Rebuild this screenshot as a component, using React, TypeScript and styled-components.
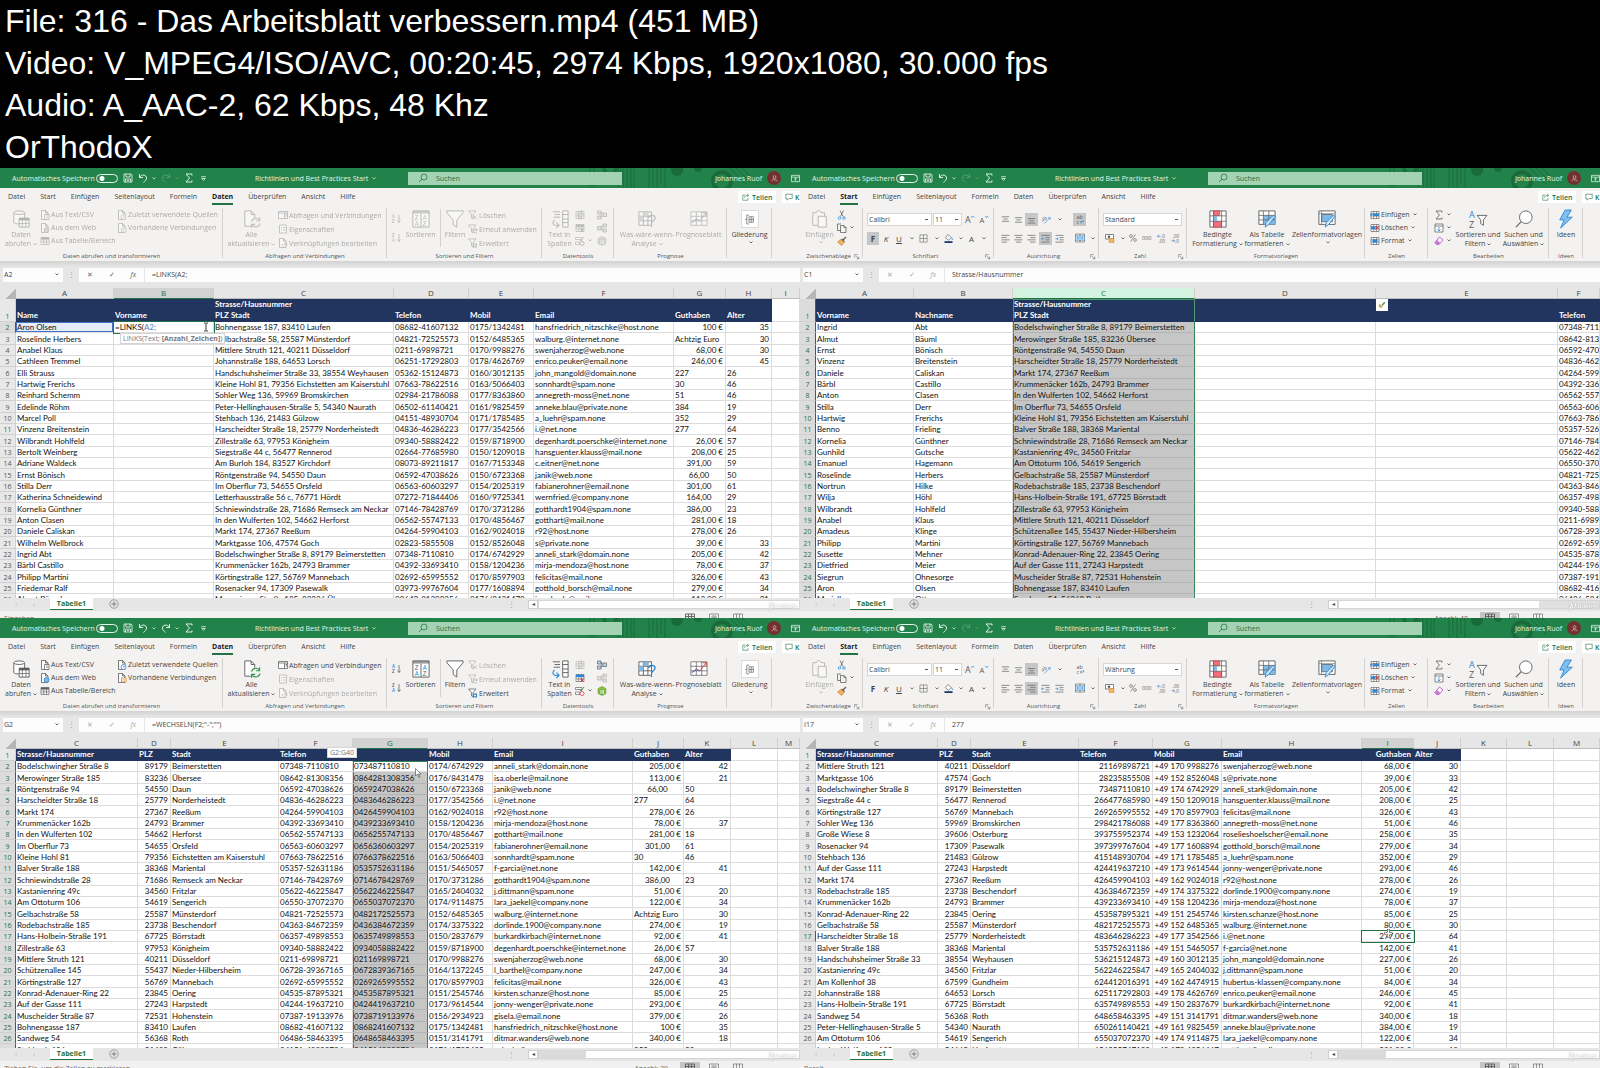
import React from "react";
import styled, { createGlobalStyle, css } from "styled-components";

const UI = `"Open Sans", "Noto Sans", sans-serif`;
const CELL = `Lato, "Noto Sans", sans-serif`;
const GREEN = "#217346";

const Global = createGlobalStyle`
  * { box-sizing: border-box; }
  body { margin: 0; background: #000; }
  button, input, select { font: inherit; color: inherit; border: 0; padding: 0; margin: 0; background: none; border-radius: 0; outline: 0; }
`;

/* ---------- icons ---------- */

type IconName = keyof typeof icons;
const K = "#5c5c5c";
const B = "#2b88d8";

const doc = (
  <path d="M3 1h8l5 5v13H3zM11 1v5h5" fill="#fff" stroke={K} strokeWidth="1.6" />
);
const grid = (
  <path d="M2 3h16v14H2zM2 7.500h16M2 12h16M7.500 3v14M13 3v14" fill="#fff" stroke={K} strokeWidth="1.300" />
);
const funnel = <path d="M1 2h15l-6 7v9l-3-2V9z" fill="#fff" stroke={K} strokeWidth="1.500" />;
const letters = (t: string, x: number, y: number, s: number, f = K, w = 400) => (
  <text x={x} y={y} fontSize={s} fill={f} fontWeight={w} fontFamily="Open Sans, sans-serif">{t}</text>
);
const lines = (rows: number[][]) => (
  <path d={rows.map(([x, y, w]) => `M${x} ${y}h${w}`).join("")} stroke={K} strokeWidth="1.500" fill="none" />
);

const icons = {
  data: (
    <>
      <path d="M2 3v11c0 2 12 2 12 0V3" fill="#fff" stroke={K} />
      <ellipse cx="8" cy="3" rx="6" ry="2" fill="#fff" stroke={K} />
      <path d="M8 9h11v10H8z" fill="#fff" stroke={K} />
      <path d="M8 9h11v2.500H8z" fill={K} />
      <path d="M8 15h11M11.500 9v10M15.500 9v10" stroke={K} strokeWidth=".8" />
    </>
  ),
  docText: <>{doc}<path d="M9 9h9v10H9z" fill="#fff" stroke={K} strokeWidth="1.500" /><path d="M12 12h4M12 15h4" stroke={K} /></>,
  docWeb: <>{doc}<circle cx="13" cy="14" r="5" fill="#7fb9e6" stroke={B} strokeWidth="1.500" /></>,
  docClock: <>{doc}<circle cx="13" cy="14" r="5" fill="#fff" stroke={B} strokeWidth="1.500" /><path d="M13 11v3h3" fill="none" stroke={B} strokeWidth="1.300" /></>,
  docLink: <>{doc}<path d="M9 10h9v8H9z" fill="#fff" stroke="#d98326" strokeWidth="1.600" /><path d="M11 14h5" stroke="#d98326" strokeWidth="1.500" /></>,
  table: <>{grid}<path d="M2 3h16v3H2z" fill={K} /></>,
  refresh: (
    <>
      <path d="M2 1h7l4 4v13H2zM9 1v4h4" fill="#fff" stroke={K} />
      <circle cx="14" cy="14" r="6" fill="#f3f2f1" />
      <path d="M9.500 13a5 5 0 0 1 9-1.500M18.500 8v4h-4M19 15a5 5 0 0 1-9 1.500M9.500 20v-4h4" fill="none" stroke="#3a9a55" strokeWidth="1.200" />
    </>
  ),
  panel: <path d="M1 3h18v14H1zM1 6h18M13 6v11M15 9h3M15 12h3" fill="#fff" stroke={K} strokeWidth="1.500" />,
  props: <path d="M3 2h14v16H3zM6 7h2M6 12h2M10 7h5M10 12h5" fill="#fff" stroke={K} strokeWidth="1.500" />,
  links: <>{doc}<path d="M7 12l5 5m0-5a3 3 0 0 1 5 4" fill="none" stroke={K} strokeWidth="1.800" /></>,
  az: <>{letters("A", 0, 8, 9, B, 600)}{letters("Z", 0, 18, 9, K, 600)}<path d="M14 2v15M11 13l3 4 3-4" fill="none" stroke={K} strokeWidth="1.500" /></>,
  za: <>{letters("Z", 0, 8, 9, K, 600)}{letters("A", 0, 18, 9, B, 600)}<path d="M14 2v15M11 13l3 4 3-4" fill="none" stroke={K} strokeWidth="1.500" /></>,
  sort: (
    <>
      <path d="M1 1h18v18H1zM10 4v15" fill="#fff" stroke={K} />
      <path d="M1 1h18v3H1z" fill={K} opacity=".6" />
      {letters("Z", 3, 11, 7)}{letters("A", 3, 18, 7, B)}{letters("A", 12, 11, 7, B)}{letters("Z", 12, 18, 7)}
    </>
  ),
  funnel: <path d="M1 1h18v2l-7 8v8l-4-3v-5L1 3z" fill="#fff" stroke={K} />,
  funnelX: <>{funnel}<path d="M10 11l7 7m0-7l-7 7" stroke={K} strokeWidth="1.500" /></>,
  funnelRe: <>{funnel}<path d="M18 12a4 4 0 1 0 0 4M18 9v4h-4" fill="none" stroke={K} strokeWidth="1.500" /></>,
  funnelAdv: <>{funnel}<rect x="10" y="11" width="8" height="8" fill={B} /><circle cx="14" cy="15" r="2" fill="#fff" /></>,
  textCols: (
    <>
      <path d="M2 2h8M4 5h6M3 8h7" stroke={K} />
      <path d="M13 1h6v18h-6zM13 5h6M13 10h6M13 14h6" fill="#fff" stroke={K} />
      <path d="M4 11c-4 4-1 7 5 6M6 14l3 3-3 3" fill="none" stroke={B} strokeWidth="1.200" />
    </>
  ),
  flash: <>{grid}<path d="M12 1L6 11h4l-2 8 8-11h-4l2-7z" fill="#ccc" stroke={K} /></>,
  dup: <>{grid}<path d="M2 3h16v5H2z" fill={B} /><path d="M11 11l6 6m0-6l-6 6" stroke="#d13438" strokeWidth="2" /></>,
  valid: <><path d="M1 3h13v4H1zM1 12h8v5H1z" fill="#fff" stroke={K} strokeWidth="1.300" /><path d="M9 7l3 3 6-8" fill="none" stroke="#3a9a55" strokeWidth="2" /><circle cx="14" cy="15" r="4" fill="#fff" stroke="#d13438" strokeWidth="1.600" /></>,
  consol: <path d="M1 2h7v6H1zM1 12h7v6H1zM12 6h7v7h-7zM8 5h2v9H8" fill="#b9d9f2" stroke={K} strokeWidth="1.400" />,
  relate: <path d="M1 7h7v7H1zM12 2h7v6h-7zM12 12h7v6h-7zM8 10h2V5h2M10 10v5h2" fill="#ccc" stroke={K} strokeWidth="1.400" />,
  model: <><path d="M2 5l8-4 8 4v10l-8 4-8-4z" fill="#8cc63f" stroke="#4c8c1f" /><path d="M6 8h9v8H6zM6 12h9M10 8v8" fill="#fff" stroke="#4c8c1f" /></>,
  whatif: (
    <>
      <path d="M1 2h14v15H1zM1 7h14M1 12h14M6 2v15M11 2v15" fill="#fff" stroke={K} />
      <path d="M6 2h5v5H6zM1 7h5v5H1z" fill="#7fb9e6" />
      <path d="M12 9c0-4 7-4 7 0 0 3-4 3-4 6M15 17v2" fill="none" stroke={B} strokeWidth="1.400" />
    </>
  ),
  forecast: (
    <>
      <path d="M1 2h18v15H1zM1 7h18M1 12h18M7 2v15M13 2v15" fill="#fff" stroke={K} strokeWidth=".8" />
      <path d="M2 14l5-4 4 2 7-9M14 3h4v4" fill="none" stroke="#d13438" />
      <path d="M2 14l5-3 4 1" fill="none" stroke={B} />
    </>
  ),
  outline: <path d="M9 2H5v16h4M2 10h3M9 5h8v10H9zM13 5v10M9 10h8" fill="#fff" stroke={K} strokeWidth="1.200" />,
  paste: <path d="M2 3h4c0-3 5-3 5 0h4v4M2 3v14h6M8 7h9v12H8z" fill="#fff" stroke={K} strokeWidth="1" />,
  cut: <><path d="M6 1l6 12M13 1L7 13" stroke={K} strokeWidth="1.500" /><circle cx="5" cy="16" r="2.500" fill="none" stroke={B} strokeWidth="1.500" /><circle cx="14" cy="16" r="2.500" fill="none" stroke={B} strokeWidth="1.500" /></>,
  copy: <path d="M8 15H1V2h7M7 5h7l4 4v10H7zM14 5v4h4" fill="none" stroke={K} strokeWidth="1.500" />,
  brush: <><path d="M18 2l-6 6M9 6l6 6" stroke={K} strokeWidth="2.500" /><path d="M8 7l6 6-5 6-8-7z" fill="#f0b264" stroke="#d98326" strokeWidth="1.500" /></>,
  border: <path d="M2 2h16v16H2zM2 10h16M10 2v16" fill="none" stroke={K} strokeWidth="1.200" />,
  bucket: <><path d="M9 1l7 7-6 6-7-6z" fill="#fff" stroke={K} strokeWidth="1.500" /><path d="M17 8l2 5" stroke={B} strokeWidth="2" /><path d="M1 16h18v4H1z" fill="#20386b" /></>,
  growFont: <>{letters("A", 0, 18, 20)}<path d="M14 6l3-4 3 4" fill="none" stroke={B} strokeWidth="1.700" /></>,
  shrinkFont: <>{letters("A", 1, 18, 17)}<path d="M14 2l3 4 3-4" fill="none" stroke={B} strokeWidth="1.700" /></>,
  top: lines([[2, 4, 16], [5, 9, 10], [2, 14, 16]]),
  middle: lines([[2, 6, 16], [5, 11, 10], [2, 16, 16]]),
  bottom: lines([[2, 8, 16], [5, 13, 10], [2, 18, 16]]),
  left: lines([[1, 3, 18], [1, 8, 12], [1, 13, 18], [1, 18, 12]]),
  center: lines([[1, 3, 18], [4, 8, 12], [1, 13, 18], [4, 18, 12]]),
  right: lines([[1, 3, 18], [7, 8, 12], [1, 13, 18], [7, 18, 12]]),
  orient: <><path d="M5 19L18 6M18 11V6h-5" fill="none" stroke={B} strokeWidth="1.400" /><g transform="rotate(-30 6 12)">{letters("ab", 0, 12, 11)}</g></>,
  wrap: <>{letters("ab", 3, 9, 11)}{letters("c", 3, 19, 11)}<path d="M11 16h6v-4M13 13l-2 3 2 3" fill="none" stroke={B} strokeWidth="1.400" /></>,
  outdent: <>{lines([[1, 3, 18], [10, 8, 9], [10, 13, 9], [1, 18, 18]])}<path d="M7 10.500H1M4 8l-3 2.500L4 13" fill="none" stroke={B} strokeWidth="1.500" /></>,
  indent: <>{lines([[1, 3, 18], [10, 8, 9], [10, 13, 9], [1, 18, 18]])}<path d="M1 10.500h6M4 8l3 2.500L4 13" fill="none" stroke={B} strokeWidth="1.500" /></>,
  merge: <><path d="M1 2h18v16H1zM1 6h18M1 14h18M10 2v4M10 14v4" fill="#fff" stroke={K} strokeWidth="1.300" /><path d="M1 6h18v8H1z" fill="#cfe6f7" stroke={B} /><path d="M4 10h12M6 8l-2 2 2 2M14 8l2 2-2 2" fill="none" stroke={B} strokeWidth="1.300" /></>,
  currency: <><path d="M1 3h16v9H1z" fill="#fff" stroke={K} strokeWidth="1.500" /><circle cx="8" cy="7.500" r="2.500" fill={K} /><path d="M8 11h10v8H8z" fill="#f0b264" stroke="#d98326" /></>,
  percent: <><circle cx="5" cy="5" r="3.500" fill="none" stroke={K} strokeWidth="1.500" /><circle cx="15" cy="15" r="3.500" fill="none" stroke={K} strokeWidth="1.500" /><path d="M16 1L4 19" stroke={K} strokeWidth="1.500" /></>,
  thousand: <>{letters("000", 0, 14, 11)}</>,
  decMore: <>{letters(",0", 9, 9, 10)}{letters(",00", 4, 19, 10)}<path d="M1 5h7M4 2L1 5l3 3" fill="none" stroke={B} strokeWidth="1.500" /></>,
  decLess: <>{letters(",00", 4, 9, 10)}{letters(",0", 9, 19, 10)}<path d="M1 15h7M5 12l3 3-3 3" fill="none" stroke={B} strokeWidth="1.500" /></>,
  cond: (
    <>
      <path d="M1 1h18v18H1z" fill="#fff" stroke={K} />
      <path d="M5 1h7v5H5zM5 13h9v6H5z" fill="#f1707b" stroke="#d13438" strokeWidth=".6" />
      <path d="M5 7h4v5H5z" fill="#7fb9e6" />
      <path d="M5 1v18M14 1v18M1 6.500h18M1 12.500h18" stroke={K} strokeWidth=".8" />
    </>
  ),
  fmtTable: (
    <>
      <path d="M1 1h18v15H1z" fill="#fff" stroke={K} />
      <path d="M6 6h13v10H6z" fill="#7fb9e6" />
      <path d="M1 6h18M1 11h18M6 1v15M12 1v15" stroke={K} strokeWidth=".8" />
      <path d="M19 7l-7 9-4 3 1-5 8-8z" fill="#cfe6f7" stroke={B} />
    </>
  ),
  cellStyle: (
    <>
      <path d="M1 1h18v15H1z" fill="#fff" stroke={K} />
      <path d="M4 5h12v8H4z" fill="#7fb9e6" stroke={K} strokeWidth=".8" />
      <path d="M1 4h18M4 1v15" stroke={K} strokeWidth=".6" />
      <path d="M19 7l-7 9-4 3 1-5 8-8z" fill="#cfe6f7" stroke={B} />
    </>
  ),
  insert: <>{grid}<path d="M7 7h11v5H7z" fill={B} /><path d="M7 9.500H1M4 7L1 9.500 4 12" fill="none" stroke={B} strokeWidth="1.600" /></>,
  remove: <>{grid}<path d="M2 7h9v5H2z" fill={B} /><path d="M11 6l7 7m0-7l-7 7" stroke="#d13438" strokeWidth="2" /></>,
  format: <>{grid}<path d="M5 7h10v6H5z" fill={B} /></>,
  sigma: <path d="M16 5V2H4l7 8-7 8h12v-3" fill="none" stroke={K} strokeWidth="1.600" />,
  fill: <><path d="M2 2h16v16H2zM2 6h16" fill="#fff" stroke={K} strokeWidth="1.500" /><path d="M10 8v8M7 13l3 3 3-3" fill="none" stroke={B} strokeWidth="1.600" /></>,
  eraser: <><path d="M11 2l7 6-8 9H5l-3-4z" fill="#fff" stroke="#b146c2" strokeWidth="1.700" /><path d="M6 8l7 6-3 3H5l-3-4z" fill="#c879d6" /></>,
  sortFilter: <>{letters("A", 0, 9, 10, B)}{letters("Z", 0, 20, 10)}<path d="M9 6h11l-4 5v6l-3-2v-4z" fill="#fff" stroke={K} /></>,
  find: <><circle cx="12" cy="8" r="7" fill="#fff" stroke={K} /><path d="M7 13l-6 6" stroke={K} strokeWidth="1.200" /></>,
  bolt: <path d="M9 0L3 11h5L4 20 17 8h-6l5-8z" fill="#7fc0f0" stroke={B} />,
  save: <path d="M2 2h14l2 2v14H2zM6 2v6h8V2M5 18v-6h10v6M8 15h4" fill="none" stroke="#fff" strokeWidth="1.500" />,
  undo: <path d="M3 2v7h7M3 9c5-8 14-5 14 1 0 4-3 6-6 9" fill="none" stroke="#fff" strokeWidth="1.700" />,
  redo: <path d="M17 2v7h-7M17 9C12 1 3 4 3 10c0 4 3 6 6 9" fill="none" stroke="#fff" strokeWidth="1.700" />,
  sigmaW: <path d="M16 5V2H4l7 8-7 8h12v-3" fill="none" stroke="#fff" strokeWidth="1.700" />,
  more: <path d="M5 6h10M6 10l4 4 4-4z" fill="none" stroke="#fff" strokeWidth="1.600" />,
  lens: <><circle cx="12" cy="8" r="6" fill="none" stroke={GREEN} strokeWidth="1.500" /><path d="M8 12l-6 6" stroke={GREEN} strokeWidth="1.500" /></>,
  ribbonOpt: <path d="M1 3h18v14H1zM1 7h18M10 15V9M7 12l3-3 3 3" fill="none" stroke="#fff" strokeWidth="1.500" />,
  share: <path d="M8 5H2v13h13v-5M6 12c1-5 4-6 9-6M12 2l5 4-5 4" fill="none" stroke={GREEN} strokeWidth="1.500" />,
  comment: <path d="M2 3h16v11H9l-4 4v-4H2z" fill="none" stroke={GREEN} strokeWidth="1.500" />,
  person: <><circle cx="10" cy="6" r="4" fill="none" stroke="#e9c9c9" strokeWidth="1.700" /><path d="M3 18c0-9 14-9 14 0M7 12l6 6" fill="none" stroke="#e9c9c9" strokeWidth="1.700" /></>,
  launcher: <path d="M2 12V2h10M7 7l9 9M16 9v7H9" fill="none" stroke={K} strokeWidth="1.800" />,
  plus: <><circle cx="10" cy="10" r="8.500" fill="none" stroke="#767676" strokeWidth="1.300" /><path d="M10 5v10M5 10h10" stroke="#767676" strokeWidth="1.800" /></>,
  normal: <path d="M1 2h18v15H1zM1 7h18M1 12h18M7 2v15M13 2v15" fill="none" stroke={K} strokeWidth="1.800" />,
  page: <path d="M1 2h18v15H1zM6 6h8v11M6 6v11M8 9h4M8 12h4" fill="none" stroke="#777" strokeWidth="1.500" />,
  pageBreak: <path d="M1 2h18v15H1zM7 2v9h6V2" fill="none" stroke="#777" strokeWidth="1.500" />,
  pasteTag: <><path d="M17 3L10 11" stroke="#4a8b55" strokeWidth="3.500" /><path d="M4 8l7 6-4 3-5-4z" fill="#e5b04c" stroke="#8f7a3a" /></>,
  pointer: <path d="M5 1v15l4-4 3 7 2-1-3-6h5z" fill="#fff" stroke="#444" strokeWidth="1.200" />,
  cross: <path d="M8 3h4v5h5v4h-5v5H8v-5H3V8h5z" fill="#fff" stroke="#333" strokeWidth="1.600" strokeDasharray="2 1" />,
  ibeam: <path d="M6 2h3l1 1 1-1h3M10 3v14M6 18h3l1-1 1 1h3" fill="none" stroke="#222" strokeWidth="1.800" />,
  mark: <path d="M3 7c5-8 7-6 5 1l-3 8c-1 4 3 3 5-3l2-8m-1 6c-1 6 5 6 7-1l1-5" fill="none" stroke="#fff" strokeWidth="2.200" />,
};

const Svg = styled.svg<{ $size: number }>`
  display: block;
  flex: none;
  width: ${(p) => p.$size}px;
  height: ${(p) => p.$size}px;
  overflow: visible;
`;
const Icon = ({ name, size = 10 }: { name: IconName; size?: number }) => (
  <Svg $size={size} viewBox="0 0 20 20" aria-hidden="true">{icons[name]}</Svg>
);

const CaretSvg = styled.svg`
  display: inline-block;
  flex: none;
  width: 4px;
  height: 3px;
  margin-left: 2px;
  vertical-align: middle;
`;
const Caret = () => (
  <CaretSvg viewBox="0 0 8 6" aria-hidden="true">
    <path d="M1 1l3 3 3-3" fill="none" stroke="currentColor" strokeWidth="1.500" />
  </CaretSvg>
);

/* ---------- page ---------- */

const Page = styled.main`
  background: #000;
`;
const Info = styled.header`
  padding-left: 5px;
  color: #fff;
  font: 32px/42px "Liberation Sans", Arial, sans-serif;
  white-space: nowrap;
  overflow: hidden;
`;
const InfoLine = styled.div``;
const Frames = styled.div`
  display: grid;
  grid-template-columns: minmax(0, 1fr) minmax(0, 1fr);
`;
const Frame = styled.section`
  display: flex;
  flex-direction: column;
  min-width: 0;
  overflow: hidden;
  background: #e6e6e6;
  color: #444;
  font: 7px/9px ${UI};
  white-space: nowrap;
`;

/* ---------- title bar ---------- */

const TitleBar = styled.div`
  position: relative;
  display: grid;
  grid-template-columns: 246fr 162fr 214fr 178fr;
  align-items: center;
  height: 20px;
  overflow: hidden;
  background: #22834a;
  color: #e4f3e9;
`;
const Pattern = styled.svg`
  position: absolute;
  right: 50px;
  top: 0;
  width: 170px;
  height: 20px;
`;
const Quick = styled.div`
  display: flex;
  align-items: center;
  gap: 5px;
  padding-left: 12px;
`;
const AutoSave = styled.label`
  display: flex;
  align-items: center;
  gap: 1px;
`;
const Toggle = styled.input`
  appearance: none;
  width: 22px;
  height: 9px;
  border: 1px solid #e4f3e9;
  border-radius: 5px;
  background: radial-gradient(circle at 5px 50%, #fff 2px, transparent 3px);
`;
const QuickButton = styled.button<{ $dim?: boolean }>`
  display: flex;
  align-items: center;
  gap: 2px;
  opacity: ${(p) => (p.$dim ? 0.25 : 1)};
`;
const FileTitle = styled.button`
  justify-self: start;
  margin-left: 9px;
  white-space: nowrap;
`;
const Search = styled.label`
  position: relative;
  display: flex;
  align-items: center;
  gap: 8px;
  height: 13px;
  padding-left: 10px;
  background: #a3d3b2;
  color: ${GREEN};
`;
const SearchInput = styled.input`
  flex: 1;
  min-width: 0;
  &::placeholder { color: #2c6e48; opacity: 1; }
`;
const Account = styled.div`
  position: relative;
  display: flex;
  align-items: center;
  justify-content: flex-end;
  gap: 5px;
`;
const Avatar = styled.span`
  display: grid;
  place-items: center;
  width: 14px;
  height: 14px;
  margin-right: 5px;
  border-radius: 50%;
  background: #74302f;
`;

/* ---------- ribbon ---------- */

const Tabs = styled.nav`
  display: flex;
  align-items: center;
  gap: 15px;
  height: 18px;
  padding-left: 8px;
  background: #f3f2f1;
`;
const Tab = styled.button<{ $on?: boolean }>`
  height: 16px;
  border-bottom: 2px solid transparent;
  ${(p) => p.$on && css`
    border-color: ${GREEN};
    color: #222;
    font-weight: 700;
  `}
`;
const Actions = styled.div`
  display: flex;
  gap: 6px;
  margin-left: auto;
  overflow: hidden;
`;
const Action = styled.button<{ $cut?: boolean }>`
  display: flex;
  align-items: center;
  gap: 2px;
  width: ${(p) => (p.$cut ? 18 : 38)}px;
  height: 12px;
  padding-left: ${(p) => (p.$cut ? 3 : 4)}px;
  background: #fff;
  color: ${GREEN};
  font-weight: 600;
`;
const RibbonBar = styled.div`
  display: flex;
  height: 55px;
  background: #f3f2f1;
`;
const GroupBox = styled.div<{ $w: number }>`
  display: flex;
  flex: none;
  flex-direction: column;
  width: ${(p) => p.$w}px;
  padding-top: 1px;
  background: linear-gradient(#d4d2d0, #d4d2d0) right 2px / 1px 50px no-repeat;
`;
const GroupBody = styled.div<{ $pad: number }>`
  display: flex;
  flex: none;
  height: 45px;
  padding-left: ${(p) => p.$pad}px;
`;
const GroupLabel = styled.div`
  display: flex;
  align-items: center;
  justify-content: center;
  height: 9px;
  font-size: 6px;
  color: #555;
  padding: 0 3px;
`;
const LabelText = styled.span`
  flex: 1;
  text-align: center;
`;
const off = css`
  filter: grayscale(1);
  opacity: 0.42;
`;
const Big = styled.button<{ $w: number; $off?: boolean }>`
  display: flex;
  flex: none;
  flex-direction: column;
  align-items: center;
  justify-content: flex-start;
  gap: 2px;
  width: ${(p) => p.$w}px;
  padding-top: 3px;
  line-height: 9px;
  ${(p) => p.$off && off}
`;
const BigText = styled.span`
  text-align: center;
  white-space: pre;
`;
const Boxed = styled.span`
  display: grid;
  place-items: center;
  width: 18px;
  height: 18px;
  border: 1px solid #dddbd9;
  background: #fff;
`;
const Small = styled.button<{ $off?: boolean }>`
  display: flex;
  align-items: center;
  gap: 1px;
  height: 14px;
  ${(p) => p.$off && off}
`;
const List = styled.div<{ $w: number; $tight?: boolean }>`
  display: flex;
  flex: none;
  flex-direction: column;
  width: ${(p) => p.$w}px;
  padding-top: 1px;
  ${Small} { height: ${(p) => (p.$tight ? 13 : 14)}px; }
`;
const Rule = styled.span`
  width: 1px;
  height: 38px;
  margin: 2px 1px;
  background: #d4d2d0;
`;
const Rows = styled.div`
  display: flex;
  flex-direction: column;
  gap: 5px;
  padding-top: 5px;
`;
const Line = styled.div`
  display: flex;
  align-items: center;
  gap: 1px;
  height: 14px;
`;
const Mini = styled.button<{ $on?: boolean; $w?: number }>`
  display: flex;
  flex: none;
  align-items: center;
  justify-content: center;
  width: ${(p) => p.$w ?? 12}px;
  height: 13px;
  font-size: 8px;
  background: ${(p) => (p.$on ? "#c6c6c6" : "none")};
`;
const Spacer = styled.span<{ $w: number }>`
  flex: none;
  width: ${(p) => p.$w}px;
`;
const Drop = styled.select<{ $w: number }>`
  appearance: none;
  flex: none;
  width: ${(p) => p.$w}px;
  height: 13px;
  padding-left: 1px;
  border: 1px solid #d8d6d4;
  background: #fff linear-gradient(#555, #555) right 3px center / 3px 1px no-repeat;
`;
const Gap = styled.span`
  flex: 1;
`;

type GroupProps = { w: number; label: string; pad?: number; launch?: boolean; children: React.ReactNode };
const Group = ({ w, label, pad = 2, launch, children }: GroupProps) => (
  <GroupBox $w={w}>
    <GroupBody $pad={pad}>{children}</GroupBody>
    <GroupLabel>
      <LabelText>{label}</LabelText>
      {launch && <Icon name="launcher" size={6} />}
    </GroupLabel>
  </GroupBox>
);
type BigProps = { icon: IconName; w: number; text: string; drop?: boolean; disabled?: boolean };
const BigTool = ({ icon, w, text, drop, disabled }: BigProps) => (
  <Big $w={w} $off={disabled}>
    <Icon name={icon} size={18} />
    <BigText>{text}{drop && <Caret />}</BigText>
  </Big>
);
type SmallProps = { icon: IconName; text?: string; drop?: boolean; disabled?: boolean };
const Tool = ({ icon, text, drop, disabled }: SmallProps) => (
  <Small $off={disabled} aria-label={text ?? icon}>
    <Icon name={icon} />{text}{drop && <Caret />}
  </Small>
);

const DataRibbon = ({ locked }: { locked: boolean }) => (
  <RibbonBar>
    <Group w={223} label="Daten abrufen und transformieren">
      <BigTool icon="data" w={38} text={"Daten\nabrufen"} drop disabled={locked} />
      <List $w={77} $tight>
        <Tool icon="docText" text="Aus Text/CSV" disabled={locked} />
        <Tool icon="docWeb" text="Aus dem Web" disabled={locked} />
        <Tool icon="table" text="Aus Tabelle/Bereich" disabled={locked} />
      </List>
      <List $w={100} $tight>
        <Tool icon="docClock" text="Zuletzt verwendete Quellen" disabled={locked} />
        <Tool icon="docLink" text="Vorhandene Verbindungen" disabled={locked} />
      </List>
    </Group>
    <Group w={164} label="Abfragen und Verbindungen">
      <BigTool icon="refresh" w={53} text={"Alle\naktualisieren"} drop disabled={locked} />
      <List $w={106}>
        <Tool icon="panel" text="Abfragen und Verbindungen" disabled={locked} />
        <Tool icon="props" text="Eigenschaften" disabled />
        <Tool icon="links" text="Verknüpfungen bearbeiten" disabled />
      </List>
    </Group>
    <Group w={155} label="Sortieren und Filtern" pad={5}>
      <Rows>
        <Small $off={locked} aria-label="Von A bis Z sortieren"><Icon name="az" /></Small>
        <Small $off={locked} aria-label="Von Z bis A sortieren"><Icon name="za" /></Small>
      </Rows>
      <BigTool icon="sort" w={37} text="Sortieren" disabled={locked} />
      <Rule />
      <BigTool icon="funnel" w={26} text="Filtern" disabled={locked} />
      <List $w={70}>
        <Tool icon="funnelX" text="Löschen" disabled />
        <Tool icon="funnelRe" text="Erneut anwenden" disabled />
        <Tool icon="funnelAdv" text="Erweitert" disabled={locked} />
      </List>
    </Group>
    <Group w={72} label="Datentools">
      <BigTool icon="textCols" w={31} text={"Text in\nSpalten"} disabled={locked} />
      <List $w={22} $tight>
        <Tool icon="flash" disabled />
        <Tool icon="dup" disabled={locked} />
        <Tool icon="valid" drop disabled={locked} />
      </List>
      <List $w={12} $tight>
        <Tool icon="consol" disabled={locked} />
        <Tool icon="relate" disabled />
        <Tool icon="model" disabled={locked} />
      </List>
    </Group>
    <Group w={113} label="Prognose" pad={5}>
      <BigTool icon="whatif" w={56} text={"Was-wäre-wenn-\nAnalyse"} drop disabled={locked} />
      <BigTool icon="forecast" w={47} text="Prognoseblatt" disabled={locked} />
    </Group>
    <Group w={45} label="">
      <Big $w={41}>
        <Boxed><Icon name="outline" size={11} /></Boxed>
        <BigText>Gliederung</BigText>
        <Caret />
      </Big>
    </Group>
  </RibbonBar>
);

const StartRibbon = ({ early }: { early: boolean }) => (
  <RibbonBar>
    <Group w={63} label="Zwischenablage" launch>
      <Big $w={35} $off>
        <Icon name="paste" size={18} />
        <BigText>Einfügen</BigText>
        <Caret />
      </Big>
      <List $w={22} $tight>
        <Tool icon="cut" />
        <Tool icon="copy" drop />
        <Tool icon="brush" />
      </List>
    </Group>
    <Group w={131} label="Schriftart" pad={4} launch>
      <Rows>
        <Line>
          <Drop $w={65} aria-label="Schriftart"><option>Calibri</option></Drop>
          <Drop $w={29} aria-label="Schriftgrad"><option>11</option></Drop>
          <Mini $w={13} aria-label="Schrift vergrößern"><Icon name="growFont" size={9} /></Mini>
          <Mini $w={13} aria-label="Schrift verkleinern"><Icon name="shrinkFont" size={9} /></Mini>
        </Line>
        <Line>
          <Mini $on={early}><b>F</b></Mini>
          <Mini><i>K</i></Mini>
          <Mini><u>U</u></Mini>
          <Mini $w={10} aria-label="Unterstreichungsart"><Caret /></Mini>
          <Mini aria-label="Rahmen"><Icon name="border" size={9} /></Mini>
          <Mini $w={11} aria-label="Rahmenart"><Caret /></Mini>
          <Mini aria-label="Füllfarbe"><Icon name="bucket" size={9} /></Mini>
          <Mini $w={10} aria-label="Füllfarben"><Caret /></Mini>
          <Mini $w={11}>A</Mini>
          <Mini $w={10} aria-label="Schriftfarben"><Caret /></Mini>
        </Line>
      </Rows>
    </Group>
    <Group w={105} label="Ausrichtung" pad={5} launch>
      <Rows>
        <Line>
          <Mini aria-label="Oben"><Icon name="top" size={9} /></Mini>
          <Mini aria-label="Mitte"><Icon name="middle" size={9} /></Mini>
          <Mini $w={13} $on aria-label="Unten"><Icon name="bottom" size={9} /></Mini>
          <Mini $w={15} aria-label="Ausrichtung"><Icon name="orient" size={9} /></Mini>
          <Mini $w={8} aria-label="Richtungen"><Caret /></Mini>
          <Spacer $w={8} />
          <Mini $w={13} $on={early} aria-label="Textumbruch"><Icon name="wrap" size={10} /></Mini>
        </Line>
        <Line>
          <Mini aria-label="Links"><Icon name="left" size={9} /></Mini>
          <Mini aria-label="Zentriert"><Icon name="center" size={9} /></Mini>
          <Mini $w={13} $on={!early} aria-label="Rechts"><Icon name="right" size={9} /></Mini>
          <Mini $w={13} $on={early} aria-label="Einzug verkleinern"><Icon name="outdent" size={9} /></Mini>
          <Mini aria-label="Einzug vergrößern"><Icon name="indent" size={9} /></Mini>
          <Spacer $w={6} />
          <Mini $w={13} aria-label="Verbinden"><Icon name="merge" size={10} /></Mini>
          <Mini $w={9} aria-label="Verbindungsart"><Caret /></Mini>
        </Line>
      </Rows>
    </Group>
    <Group w={88} label="Zahl" pad={4} launch>
      <Rows>
        <Line>
          <Drop $w={79} aria-label="Zahlenformat"><option>{early ? "Standard" : "Währung"}</option></Drop>
        </Line>
        <Line>
          <Mini $w={14} aria-label="Buchhaltung"><Icon name="currency" /></Mini>
          <Mini $w={8} aria-label="Währungen"><Caret /></Mini>
          <Mini $w={12} aria-label="Prozent"><Icon name="percent" size={8} /></Mini>
          <Mini $w={13} aria-label="Tausender"><Icon name="thousand" /></Mini>
          <Mini $w={14} aria-label="Dezimalstelle hinzufügen"><Icon name="decMore" size={9} /></Mini>
          <Mini $w={12} aria-label="Dezimalstelle löschen"><Icon name="decLess" size={9} /></Mini>
        </Line>
      </Rows>
    </Group>
    <Group w={178} label="Formatvorlagen" pad={5}>
      <BigTool icon="cond" w={51} text={"Bedingte\nFormatierung"} drop />
      <BigTool icon="fmtTable" w={48} text={"Als Tabelle\nformatieren"} drop />
      <Big $w={72}>
        <Icon name="cellStyle" size={18} />
        <BigText>Zellenformatvorlagen</BigText>
        <Caret />
      </Big>
    </Group>
    <Group w={63} label="Zellen" pad={5}>
      <List $w={52} $tight>
        <Tool icon="insert" text="Einfügen" drop />
        <Tool icon="remove" text="Löschen" drop />
        <Tool icon="format" text="Format" drop />
      </List>
    </Group>
    <Group w={121} label="Bearbeiten" pad={6}>
      <List $w={20} $tight>
        <Tool icon="sigma" drop />
        <Tool icon="fill" drop />
        <Tool icon="eraser" drop />
      </List>
      <BigTool icon="sortFilter" w={48} text={"Sortieren und\nFiltern"} drop />
      <BigTool icon="find" w={43} text={"Suchen und\nAuswählen"} drop />
    </Group>
    <Group w={34} label="Ideen">
      <BigTool icon="bolt" w={30} text="Ideen" />
    </Group>
  </RibbonBar>
);

/* ---------- formula bar ---------- */

const FormulaBar = styled.div`
  display: flex;
  align-items: center;
  height: 27px;
  padding: 0 0 0 3px;
  background: linear-gradient(#d2d2d2, #e6e6e6 6px);
`;
const NameBox = styled.label`
  display: flex;
  flex: none;
  align-items: center;
  width: 60px;
  height: 14px;
  padding: 0 4px 0 1px;
  background: #fdfdfd;
`;
const NameInput = styled.input`
  flex: 1;
  min-width: 0;
`;
const Dots = styled.span`
  width: 16px;
  text-align: center;
  color: #999;
`;
const FxBox = styled.div<{ $live?: boolean }>`
  display: flex;
  flex: none;
  align-items: center;
  justify-content: space-around;
  width: 65px;
  height: 14px;
  margin-right: 1px;
  background: #fdfdfd;
  color: ${(p) => (p.$live ? "#666" : "#aaa")};
`;
const Formula = styled.input`
  flex: 1;
  min-width: 0;
  height: 14px;
  padding-left: 7px;
  background: #fdfdfd;
`;

/* ---------- sheet ---------- */

const SheetClip = styled.div`
  height: 310px;
  overflow: hidden;
  background: #fff;
`;
const Grid = styled.table`
  width: 100%;
  table-layout: fixed;
  border-collapse: separate;
  border-spacing: 0;
  color: #111;
  font: 8px/10px ${CELL};
`;
const Letter = styled.th<{ $tone?: "grey" | "green" }>`
  height: 11px;
  padding: 0;
  border-right: 1px solid #cfcfcf;
  border-bottom: 1px solid #bdbdbd;
  background: #e6e6e6;
  color: #444;
  font: 8px/10px ${UI};
  ${(p) => p.$tone === "grey" && css`
    background: #d2d2d2;
    border-bottom-color: ${GREEN};
    color: ${GREEN};
  `}
  ${(p) => p.$tone === "green" && css`
    background: #d3f3e0;
    border-bottom-color: ${GREEN};
    color: ${GREEN};
  `}
`;
const Corner = styled.td`
  padding: 0;
  background: linear-gradient(135deg, #e6e6e6 60%, #b5b5b5 60%);
`;
const Row = styled.tr<{ $tall?: boolean }>`
  height: 11px;
  &:nth-child(3n) { height: 12px; }
  ${(p) => p.$tall && css`&:first-child { height: 23px; }`}
`;
const RowNo = styled.th<{ $on?: boolean }>`
  padding: 0;
  border-right: 1px solid #cfcfcf;
  border-bottom: 1px solid #d0d0d0;
  background: #e8e8e8;
  color: #555;
  font: 7px/9px ${UI};
  vertical-align: bottom;
  ${(p) => p.$on && css`
    background: #dcdcdc;
    border-right-color: ${GREEN};
    color: ${GREEN};
  `}
`;
type Kind = "head" | "headSel" | "plain" | "ref" | "edit" | "fill" | "first" | "active";
const Cell = styled.td<{ $kind: Kind; $align: "left" | "right" | "center"; $open?: boolean }>`
  position: ${(p) => (p.$open ? "relative" : "static")};
  padding: 0 2px 0 1px;
  overflow: ${(p) => (p.$open ? "visible" : "hidden")};
  border-right: 1px solid #dcdcdc;
  border-bottom: 1px solid #dcdcdc;
  text-align: ${(p) => p.$align};
  vertical-align: bottom;
  white-space: pre;
  ${(p) => (p.$kind === "head" || p.$kind === "headSel") && css`
    border-color: #21355f;
    background: #21355f;
    color: #fff;
    font-weight: 700;
    line-height: 11px;
  `}
  ${(p) => p.$kind === "headSel" && css`
    border-right-color: #4f9a75;
    box-shadow: inset 1px 1px #4f9a75;
  `}
  ${(p) => p.$kind === "ref" && css`background: #e6edf9; box-shadow: inset 0 0 0 1px #4472c4;`}
  ${(p) => p.$kind === "edit" && css`box-shadow: 0 0 0 1px ${GREEN};`}
  ${(p) => p.$kind === "fill" && css`
    border-bottom-color: #b4b4b4;
    border-right-color: #2e8555;
    background: #c6c6c6;
    box-shadow: inset 1px 0 #2e8555;
  `}
  ${(p) => p.$kind === "first" && css`
    border-right-color: #2e8555;
    box-shadow: inset 1px 1px #2e8555;
  `}
  ${(p) => p.$kind === "active" && css`box-shadow: 0 0 0 1px ${GREEN};`}
`;
const RefText = styled.span`
  color: #4a86c8;
`;
const Over = styled.span<{ $x: number; $y: number }>`
  position: absolute;
  z-index: 2;
  left: ${(p) => p.$x}px;
  top: ${(p) => p.$y}px;
`;
const Tip = styled(Over)`
  padding: 0 2px;
  border: 1px solid #d5d5d5;
  background: #fff;
  color: #777;
  font: 7px/9px ${UI};
`;
const Tag = styled(Over)`
  display: grid;
  place-items: center;
  width: 12px;
  height: 12px;
  background: #fff;
`;

/* ---------- bottom bars ---------- */

const SheetBar = styled.div`
  position: relative;
  display: flex;
  align-items: center;
  height: 13px;
  padding-bottom: 1px;
  background: #e6e6e6;
`;
const Nav = styled.span`
  display: flex;
  justify-content: space-around;
  width: 50px;
  padding: 0 7px;
  color: #b5b5b5;
`;
const SheetTab = styled.button`
  width: 43px;
  height: 12px;
  border-bottom: 1px solid ${GREEN};
  background: #fff;
  color: ${GREEN};
  font-weight: 700;
  line-height: 10px;
`;
const AddSheet = styled.button`
  margin: 0 auto 0 16px;
`;
const Scroll = styled.div`
  display: flex;
  align-items: center;
  width: 34%;
  height: 9px;
`;
const ScrollArrow = styled.button`
  width: 10px;
  height: 9px;
  border: 1px solid #cfcfcf;
  background: #fff;
  font-size: 6px;
  line-height: 7px;
`;
const Track = styled.div<{ $from: number; $to: number }>`
  flex: 1;
  height: 9px;
  background: ${(p) => `linear-gradient(90deg, #dadada ${p.$from}%, #fff ${p.$from}%, #fff ${p.$to}%, #e0e0e0 ${p.$to}%)`};
  border: 1px solid #d5d5d5;
`;
const Watermark = styled.span`
  position: absolute;
  right: 3px;
  top: 4px;
  display: flex;
  align-items: center;
  gap: 2px;
  color: #fff;
  font-size: 6px;
  line-height: 8px;
  filter: drop-shadow(0 0 1px #999);
`;
const Bottom = styled(Spacer)`
  height: 9px;
`;
const Status = styled.div`
  display: flex;
  align-items: flex-start;
  height: 7px;
  padding: 3px 9px 0 4px;
  overflow: hidden;
  background: #f1f1f1;
  color: #666;
`;
const Views = styled.span`
  display: flex;
  gap: 4px;
  margin: -2px 43px 0 12px;
`;
const View = styled.button<{ $on?: boolean }>`
  display: grid;
  place-items: center;
  width: 20px;
  height: 12px;
  background: ${(p) => (p.$on ? "#c4c4c4" : "none")};
`;

/* ---------- data ---------- */

/* A leading ">" aligns a cell to the right, "^" centres it. */
const parse = (t: string) => t.trim().split("\n").map((r) => r.split("|").map((c) => c.replace("¶", "\n")));

const namesSheet = parse(`
Name|Vorname|Strasse/Hausnummer¶PLZ Stadt|Telefon|Mobil|Email|Guthaben|Alter|
Aron Olsen||Bohnengasse 187, 83410 Laufen|08682-41607132|0175/1342481|hansfriedrich_nitzschke@host.none|>100 €|>35|
Roselinde Herbers||Gelbachstraße 58, 25587 Münsterdorf|04821-72525573|0152/6485365|walburg.@internet.none|Achtzig Euro|>30|
Anabel Klaus||Mittlere Struth 121, 40211 Düsseldorf|0211-69898721|0170/9988276|swenjaherzog@web.none|>68,00 €|>30|
Cathleen Tremmel||Johannstraße 188, 64653 Lorsch|06251-17292803|0178/4626769|enrico.peuker@email.none|>246,00 €|>45|
Elli Strauss||Handschuhsheimer Straße 33, 38554 Weyhausen|05362-15124873|0160/3012135|john_mangold@domain.none|227|26|
Hartwig Frerichs||Kleine Hohl 81, 79356 Eichstetten am Kaiserstuhl|07663-78622516|0163/5066403|sonnhardt@spam.none|30|46|
Reinhard Schemm||Sohler Weg 136, 59969 Bromskirchen|02984-21786088|0177/8363860|annegreth-moss@net.none|51|46|
Edelinde Röhm||Peter-Hellinghausen-Straße 5, 54340 Naurath|06502-61140421|0161/9825459|anneke.blau@private.none|384|19|
Marcel Poll||Stehbach 136, 21483 Gülzow|04151-48930704|0171/1785485|a_luehr@spam.none|352|29|
Vinzenz Breitenstein||Harscheidter Straße 18, 25779 Norderheistedt|04836-46286223|0177/3542566|i.@net.none|277|64|
Wilbrandt Hohlfeld||Zillestraße 63, 97953 Königheim|09340-58882422|0159/8718900|degenhardt.poerschke@internet.none|>26,00 €|57|
Bertolt Weinberg||Siegstraße 44 c, 56477 Rennerod|02664-77685980|0150/1209018|hansguenter.klauss@mail.none|>208,00 €|25|
Adriane Waldeck||Am Burloh 184, 83527 Kirchdorf|08073-89211817|0167/7153348|c.eitner@net.none|^391,00|59|
Ernst Bönisch||Röntgenstraße 94, 54550 Daun|06592-47038626|0150/6723368|janik@web.none|^66,00|50|
Stilla Derr||Im Oberflur 73, 54655 Orsfeld|06563-60603297|0154/2025319|fabianerohner@email.none|^301,00|61|
Katherina Schneidewind||Letterhausstraße 56 c, 76771 Hördt|07272-71844406|0160/9725341|wernfried.@company.none|^164,00|29|
Kornelia Günthner||Schniewindstraße 28, 71686 Remseck am Neckar|07146-78428769|0170/3731286|gotthardt1904@spam.none|^386,00|23|
Anton Clasen||In den Wulferten 102, 54662 Herforst|06562-55747133|0170/4856467|gotthart@mail.none|>281,00 €|18|
Daniele Caliskan||Markt 174, 27367 Reeßum|04264-59904103|0162/9024018|r92@host.none|>278,00 €|26|
Wilhelm Wellbrock||Marktgasse 106, 47574 Goch|02823-5855508|0152/8526048|s@private.none|>39,00 €|>33|
Ingrid Abt||Bodelschwingher Straße 8, 89179 Beimerstetten|07348-7110810|0174/6742929|anneli_stark@domain.none|>205,00 €|>42|
Bärbl Castillo||Krummenäcker 162b, 24793 Brammer|04392-33693410|0158/1204236|mirja-mendoza@host.none|>78,00 €|>37|
Philipp Martini||Körtingstraße 127, 56769 Mannebach|02692-65995552|0170/8597903|felicitas@mail.none|>326,00 €|>43|
Friedemar Ralf||Rosenacker 94, 17309 Pasewalk|03973-99767604|0177/1608894|gotthold_borsch@mail.none|>279,00 €|>34|
Almut Bäuml||Merowinger Straße 185, 83236 Übersee|08642-81308356|0176/8431478|isa.oberle@mail.none|>113,00 €|>21|
`);

const splitSheet = parse(`
Vorname|Nachname|Strasse/Hausnummer¶PLZ Stadt|||Telefon
Ingrid|Abt|Bodelschwingher Straße 8, 89179 Beimerstetten|||07348-7110810
Almut|Bäuml|Merowinger Straße 185, 83236 Übersee|||08642-81308356
Ernst|Bönisch|Röntgenstraße 94, 54550 Daun|||06592-47038626
Vinzenz|Breitenstein|Harscheidter Straße 18, 25779 Norderheistedt|||04836-46286223
Daniele|Caliskan|Markt 174, 27367 Reeßum|||04264-59904103
Bärbl|Castillo|Krummenäcker 162b, 24793 Brammer|||04392-33693410
Anton|Clasen|In den Wulferten 102, 54662 Herforst|||06562-55747133
Stilla|Derr|Im Oberflur 73, 54655 Orsfeld|||06563-60603297
Hartwig|Frerichs|Kleine Hohl 81, 79356 Eichstetten am Kaiserstuhl|||07663-78622516
Benno|Frieling|Balver Straße 188, 38368 Mariental|||05357-52631186
Kornelia|Günthner|Schniewindstraße 28, 71686 Remseck am Neckar|||07146-78428769
Gunhild|Gutsche|Kastanienring 49c, 34560 Fritzlar|||05622-46225847
Emanuel|Hagemann|Am Ottoturm 106, 54619 Sengerich|||06550-37072370
Roselinde|Herbers|Gelbachstraße 58, 25587 Münsterdorf|||04821-72525573
Nortrun|Hilke|Rodebachstraße 185, 23738 Beschendorf|||04363-84672359
Wilja|Höhl|Hans-Holbein-Straße 191, 67725 Börrstadt|||06357-49898553
Wilbrandt|Hohlfeld|Zillestraße 63, 97953 Königheim|||09340-58882422
Anabel|Klaus|Mittlere Struth 121, 40211 Düsseldorf|||0211-69898721
Amadeus|Klinge|Schützenallee 145, 55437 Nieder-Hilbersheim|||06728-39367165
Philipp|Martini|Körtingstraße 127, 56769 Mannebach|||02692-65995552
Susette|Mehner|Konrad-Adenauer-Ring 22, 23845 Oering|||04535-87895321
Dietfried|Meier|Auf der Gasse 111, 27243 Harpstedt|||04244-19637210
Siegrun|Ohnesorge|Muscheider Straße 87, 72531 Hohenstein|||07387-19133976
Aron|Olsen|Bohnengasse 187, 83410 Laufen|||08682-41607132
Marielle|Otto|Sandweg 54, 56368 Roth|||06486-58463395
`);

const phoneSheet = parse(`
Strasse/Hausnummer|PLZ|Stadt|Telefon||Mobil|Email|Guthaben|Alter||
Bodelschwingher Straße 8|>89179|Beimerstetten|07348-7110810|073487110810|0174/6742929|anneli_stark@domain.none|>205,00 €|>42||
Merowinger Straße 185|>83236|Übersee|08642-81308356|0864281308356|0176/8431478|isa.oberle@mail.none|>113,00 €|>21||
Röntgenstraße 94|>54550|Daun|06592-47038626|0659247038626|0150/6723368|janik@web.none|^66,00|50||
Harscheidter Straße 18|>25779|Norderheistedt|04836-46286223|0483646286223|0177/3542566|i.@net.none|277|64||
Markt 174|>27367|Reeßum|04264-59904103|0426459904103|0162/9024018|r92@host.none|>278,00 €|26||
Krummenäcker 162b|>24793|Brammer|04392-33693410|0439233693410|0158/1204236|mirja-mendoza@host.none|>78,00 €|>37||
In den Wulferten 102|>54662|Herforst|06562-55747133|0656255747133|0170/4856467|gotthart@mail.none|>281,00 €|18||
Im Oberflur 73|>54655|Orsfeld|06563-60603297|0656360603297|0154/2025319|fabianerohner@email.none|^301,00|61||
Kleine Hohl 81|>79356|Eichstetten am Kaiserstuhl|07663-78622516|0766378622516|0163/5066403|sonnhardt@spam.none|30|46||
Balver Straße 188|>38368|Mariental|05357-52631186|0535752631186|0151/5465057|f-garcia@net.none|>142,00 €|>41||
Schniewindstraße 28|>71686|Remseck am Neckar|07146-78428769|0714678428769|0170/3731286|gotthardt1904@spam.none|^386,00|23||
Kastanienring 49c|>34560|Fritzlar|05622-46225847|0562246225847|0165/2404032|j.dittmann@spam.none|>51,00 €|>20||
Am Ottoturm 106|>54619|Sengerich|06550-37072370|0655037072370|0174/9114875|lara_jaekel@company.none|>122,00 €|>34||
Gelbachstraße 58|>25587|Münsterdorf|04821-72525573|0482172525573|0152/6485365|walburg.@internet.none|Achtzig Euro|>30||
Rodebachstraße 185|>23738|Beschendorf|04363-84672359|0436384672359|0174/3375322|dorlinde.1900@company.none|>274,00 €|>19||
Hans-Holbein-Straße 191|>67725|Börrstadt|06357-49898553|0635749898553|0150/2837679|burkardkirbach@internet.none|>92,00 €|>41||
Zillestraße 63|>97953|Königheim|09340-58882422|0934058882422|0159/8718900|degenhardt.poerschke@internet.none|>26,00 €|57||
Mittlere Struth 121|>40211|Düsseldorf|0211-69898721|021169898721|0170/9988276|swenjaherzog@web.none|>68,00 €|>30||
Schützenallee 145|>55437|Nieder-Hilbersheim|06728-39367165|0672839367165|0164/1372245|l_barthel@company.none|>247,00 €|>34||
Körtingstraße 127|>56769|Mannebach|02692-65995552|0269265995552|0170/8597903|felicitas@mail.none|>326,00 €|>43||
Konrad-Adenauer-Ring 22|>23845|Oering|04535-87895321|0453587895321|0151/2545746|kirsten.schanze@host.none|>85,00 €|>25||
Auf der Gasse 111|>27243|Harpstedt|04244-19637210|0424419637210|0173/9614544|jonny-wenger@private.none|>293,00 €|>46||
Muscheider Straße 87|>72531|Hohenstein|07387-19133976|0738719133976|0156/2934923|gisela.@email.none|>379,00 €|>26||
Bohnengasse 187|>83410|Laufen|08682-41607132|0868241607132|0175/1342481|hansfriedrich_nitzschke@host.none|>100 €|>35||
Sandweg 54|>56368|Roth|06486-58463395|0648658463395|0151/3141791|ditmar.wanders@web.none|>340,00 €|>18||
Stehbach 136|>21483|Gülzow|04151-48930704|0415148930704|0171/1785485|a_luehr@spam.none|352|29||
`);

const cleanSheet = parse(`
Strasse/Hausnummer|PLZ|Stadt|Telefon|Mobil|Email|>Guthaben|Alter|||
Mittlere Struth 121|>40211|Düsseldorf|>21169898721|>+49 170 9988276|swenjaherzog@web.none|>68,00 €|>30|||
Marktgasse 106|>47574|Goch|>28235855508|>+49 152 8526048|s@private.none|>39,00 €|>33|||
Bodelschwingher Straße 8|>89179|Beimerstetten|>73487110810|>+49 174 6742929|anneli_stark@domain.none|>205,00 €|>42|||
Siegstraße 44 c|>56477|Rennerod|>266477685980|>+49 150 1209018|hansguenter.klauss@mail.none|>208,00 €|>25|||
Körtingstraße 127|>56769|Mannebach|>269265995552|>+49 170 8597903|felicitas@mail.none|>326,00 €|>43|||
Sohler Weg 136|>59969|Bromskirchen|>298421786088|>+49 177 8363860|annegreth-moss@net.none|>51,00 €|>46|||
Große Wiese 8|>39606|Osterburg|>393755952374|>+49 153 1232064|roselieshoelscher@email.none|>258,00 €|>35|||
Rosenacker 94|>17309|Pasewalk|>397399767604|>+49 177 1608894|gotthold_borsch@mail.none|>279,00 €|>34|||
Stehbach 136|>21483|Gülzow|>415148930704|>+49 171 1785485|a_luehr@spam.none|>352,00 €|>29|||
Auf der Gasse 111|>27243|Harpstedt|>424419637210|>+49 173 9614544|jonny-wenger@private.none|>293,00 €|>46|||
Markt 174|>27367|Reeßum|>426459904103|>+49 162 9024018|r92@host.none|>278,00 €|>26|||
Rodebachstraße 185|>23738|Beschendorf|>436384672359|>+49 174 3375322|dorlinde.1900@company.none|>274,00 €|>19|||
Krummenäcker 162b|>24793|Brammer|>439233693410|>+49 158 1204236|mirja-mendoza@host.none|>78,00 €|>37|||
Konrad-Adenauer-Ring 22|>23845|Oering|>453587895321|>+49 151 2545746|kirsten.schanze@host.none|>85,00 €|>25|||
Gelbachstraße 58|>25587|Münsterdorf|>482172525573|>+49 152 6485365|walburg.@internet.none|>80,00 €|>30|||
Harscheidter Straße 18|>25779|Norderheistedt|>483646286223|>+49 177 3542566|i.@net.none|>277,00 €|>64|||
Balver Straße 188|>38368|Mariental|>535752631186|>+49 151 5465057|f-garcia@net.none|>142,00 €|>41|||
Handschuhsheimer Straße 33|>38554|Weyhausen|>536215124873|>+49 160 3012135|john_mangold@domain.none|>227,00 €|>26|||
Kastanienring 49c|>34560|Fritzlar|>562246225847|>+49 165 2404032|j.dittmann@spam.none|>51,00 €|>20|||
Am Kollenhof 38|>67599|Gundheim|>624412016391|>+49 162 4474915|hubertus-klassen@company.none|>84,00 €|>34|||
Johannstraße 188|>64653|Lorsch|>625117292803|>+49 178 4626769|enrico.peuker@email.none|>246,00 €|>45|||
Hans-Holbein-Straße 191|>67725|Börrstadt|>635749898553|>+49 150 2837679|burkardkirbach@internet.none|>92,00 €|>41|||
Sandweg 54|>56368|Roth|>648658463395|>+49 151 3141791|ditmar.wanders@web.none|>340,00 €|>18|||
Peter-Hellinghausen-Straße 5|>54340|Naurath|>650261140421|>+49 161 9825459|anneke.blau@private.none|>384,00 €|>19|||
Am Ottoturm 106|>54619|Sengerich|>655037072370|>+49 174 9114875|lara_jaekel@company.none|>122,00 €|>34|||
In den Wulferten 102|>54662|Herforst|>656255747133|>+49 170 4856467|gotthart@mail.none|>281,00 €|>18|||
`);

type Book = {
  tab: "Daten" | "Start";
  first: boolean;
  redo?: boolean;
  name: string;
  formula: string;
  cols: [string, number][];
  rows: string[][];
  navy: number;
  selCol: number;
  tone: "grey" | "green";
  kind: (row: number, col: number) => Kind | undefined;
  rowOn: (row: number) => boolean;
  extra: (row: number, col: number) => React.ReactNode;
  thumb: [number, number];
  status: string;
  count?: string;
};

const books: Book[] = [
  {
    tab: "Daten", first: true, name: "A2", formula: "=LINKS(A2;",
    cols: [["A", 98], ["B", 100], ["C", 180], ["D", 75], ["E", 65], ["F", 140], ["G", 52], ["H", 46], ["I", 28]],
    rows: namesSheet, navy: 8, selCol: 1, tone: "grey",
    kind: (r, c) => (r === 2 && c === 0 ? "ref" : r === 2 && c === 1 ? "edit" : undefined),
    rowOn: (r) => r === 2,
    extra: (r, c) =>
      r === 2 && c === 1 && (
        <>
          =LINKS(<RefText>A2;</RefText>
          <Over $x={87} $y={0}><Icon name="ibeam" /></Over>
          <Tip $x={6} $y={11}>LINKS(Text; <b>[Anzahl_Zeichen]</b>)</Tip>
        </>
      ),
    thumb: [0, 100], status: "Eingeben",
  },
  {
    tab: "Start", first: true, name: "C1", formula: "Strasse/Hausnummer",
    cols: [["A", 98], ["B", 99], ["C", 182], ["D", 181], ["E", 182], ["F", 42]],
    rows: splitSheet, navy: 6, selCol: 2, tone: "green",
    kind: (r, c) => (c !== 2 ? undefined : r === 1 ? "headSel" : "fill"),
    rowOn: () => true,
    extra: (r, c) => r === 1 && c === 4 && <Tag $x={0} $y={0}><Icon name="pasteTag" size={8} /></Tag>,
    thumb: [0, 77], status: "", count: "Anzahl: 40",
  },
  {
    tab: "Daten", first: false, redo: true, name: "G2", formula: `=WECHSELN(F2;"-";"")`,
    cols: [["C", 122], ["D", 33], ["E", 108], ["F", 74], ["G", 75], ["H", 65], ["I", 140], ["J", 51], ["K", 47], ["L", 47], ["M", 22]],
    rows: phoneSheet, navy: 9, selCol: 4, tone: "grey",
    kind: (r, c) => (c !== 4 || r === 1 ? undefined : r === 2 ? "first" : "fill"),
    rowOn: (r) => r > 1,
    extra: (r, c) =>
      r === 1 && c === 3 ? <Tip $x={48} $y={-2}>G2:G40</Tip>
      : r === 2 && c === 4 ? <Over $x={60} $y={7}><Icon name="pointer" /></Over>
      : null,
    thumb: [18, 100], status: "Ziehen Sie, um die Zellen zu markieren", count: "Anzahl: 39",
  },
  {
    tab: "Start", first: false, name: "I17", formula: "277",
    cols: [["C", 122], ["D", 33], ["E", 108], ["F", 74], ["G", 69], ["H", 140], ["I", 52], ["J", 47], ["K", 46], ["L", 47], ["M", 46]],
    rows: cleanSheet, navy: 8, selCol: 6, tone: "grey",
    kind: (r, c) => (r === 17 && c === 6 ? "active" : undefined),
    rowOn: (r) => r === 17,
    extra: (r, c) => r === 17 && c === 6 && <Over $x={21} $y={-3}><Icon name="cross" size={11} /></Over>,
    thumb: [18, 100], status: "Bereit",
  },
];

const alignOf = (t: string) => (t[0] === ">" ? "right" : t[0] === "^" ? "center" : "left");

const Sheet = ({ book }: { book: Book }) => (
  <SheetClip>
    <Grid>
      <colgroup>
        <col width={16} />
        {book.cols.map(([l, w]) => <col key={l} width={w} />)}
      </colgroup>
      <thead>
        <tr>
          <Corner />
          {book.cols.map(([l], i) => (
            <Letter key={l} scope="col" $tone={i === book.selCol ? book.tone : undefined}>{l}</Letter>
          ))}
        </tr>
      </thead>
      <tbody>
        {book.rows.map((cells, i) => {
          const r = i + 1;
          return (
            <Row key={r} $tall={book.first}>
              <RowNo scope="row" $on={book.rowOn(r)}>{r}</RowNo>
              {cells.map((t, c) => {
                const extra = book.extra(r, c);
                const kind = book.kind(r, c) ?? (r === 1 && c < book.navy ? "head" : "plain");
                return (
                  <Cell key={c} $kind={kind} $align={alignOf(t)} $open={!!extra}>
                    {t.replace(/^[>^]/, "")}{extra}
                  </Cell>
                );
              })}
            </Row>
          );
        })}
      </tbody>
    </Grid>
  </SheetClip>
);

const tabNames = ["Datei", "Start", "Einfügen", "Seitenlayout", "Formeln", "Daten", "Überprüfen", "Ansicht", "Hilfe"];

const Workbook = ({ book }: { book: Book }) => (
  <Frame>
    <TitleBar>
      <Pattern viewBox="0 0 170 20" aria-hidden="true">
        <g fill="none" stroke="#1a6b3b" strokeWidth="1">
          <path d="M10 0v20M14 0v20M38 0v20M40 0v14M43 0v20M47 0v20M51 0v20M54 0v20M69 0v20M73 0v18M77 0v20M81 0v16M85 0v20" />
          <circle cx="142" cy="13" r="9" strokeWidth="4" />
          <circle cx="30" cy="0" r="6" strokeWidth="3" />
          <path d="M150 0l16 16M156 0l14 14M162 0l8 8" />
        </g>
        <circle cx="97" cy="2" r="6" fill="#1a6b3b" />
        <circle cx="118" cy="0" r="4" fill="#1a6b3b" />
      </Pattern>
      <Quick>
        <AutoSave>Automatisches Speichern<Toggle type="checkbox" /></AutoSave>
        <QuickButton aria-label="Speichern"><Icon name="save" /></QuickButton>
        <QuickButton aria-label="Rückgängig"><Icon name="undo" /><Caret /></QuickButton>
        <QuickButton aria-label="Wiederholen" $dim={!book.redo}><Icon name="redo" /><Caret /></QuickButton>
        <QuickButton aria-label="Summe"><Icon name="sigmaW" /></QuickButton>
        <QuickButton aria-label="Anpassen"><Icon name="more" size={9} /></QuickButton>
      </Quick>
      <FileTitle>Richtlinien und Best Practices Start <Caret /></FileTitle>
      <Search>
        <Icon name="lens" />
        <SearchInput placeholder="Suchen" aria-label="Suchen" />
      </Search>
      <Account>
        Johannes Ruof
        <Avatar><Icon name="person" size={7} /></Avatar>
        <Icon name="ribbonOpt" size={9} />
      </Account>
    </TitleBar>
    <Tabs>
      {tabNames.map((t) => <Tab key={t} $on={t === book.tab}>{t}</Tab>)}
      <Actions>
        <Action><Icon name="share" size={8} />Teilen</Action>
        <Action $cut aria-label="Kommentare"><Icon name="comment" size={8} />K</Action>
      </Actions>
    </Tabs>
    {book.tab === "Daten" ? <DataRibbon locked={book.first} /> : <StartRibbon early={book.first} />}
    <FormulaBar>
      <NameBox>
        <NameInput defaultValue={book.name} aria-label="Namenfeld" />
        <Caret />
      </NameBox>
      <Dots>⋮</Dots>
      <FxBox $live={book.first && book.tab === "Daten"}>
        <span>✕</span><span>✓</span><i>fx</i>
      </FxBox>
      <Formula defaultValue={book.formula} aria-label="Bearbeitungsleiste" />
    </FormulaBar>
    <Sheet book={book} />
    <SheetBar>
      <Nav><span>‹</span><span>›</span></Nav>
      <SheetTab>Tabelle1</SheetTab>
      <AddSheet aria-label="Neues Blatt"><Icon name="plus" /></AddSheet>
      <Dots>⋮</Dots>
      <Spacer $w={9} />
      <Scroll>
        <ScrollArrow aria-label="Nach links">◂</ScrollArrow>
        <Track $from={book.thumb[0]} $to={book.thumb[1]} />
      </Scroll>
      <Watermark><Icon name="mark" size={8} />udemy</Watermark>
    </SheetBar>
    <Status>
      {book.status}
      <Gap />
      {book.count}
      <Views>
        <View $on={!(book.first && book.tab === "Daten")} aria-label="Normal"><Icon name="normal" /></View>
        <View aria-label="Seitenlayout"><Icon name="page" /></View>
        <View aria-label="Umbruchvorschau"><Icon name="pageBreak" /></View>
      </Views>
    </Status>
  </Frame>
);

export default function App() {
  return (
    <Page>
      <Global />
      <Info>
        <InfoLine>File: 316 - Das Arbeitsblatt verbessern.mp4 (451 MB)</InfoLine>
        <InfoLine>Video: V_MPEG4/ISO/AVC, 00:20:45, 2974 Kbps, 1920x1080, 30.000 fps</InfoLine>
        <InfoLine>Audio: A_AAC-2, 62 Kbps, 48 Khz</InfoLine>
        <InfoLine>OrThodoX</InfoLine>
      </Info>
      <Frames>
        {books.map((b) => <Workbook key={b.name} book={b} />)}
      </Frames>
    </Page>
  );
}
